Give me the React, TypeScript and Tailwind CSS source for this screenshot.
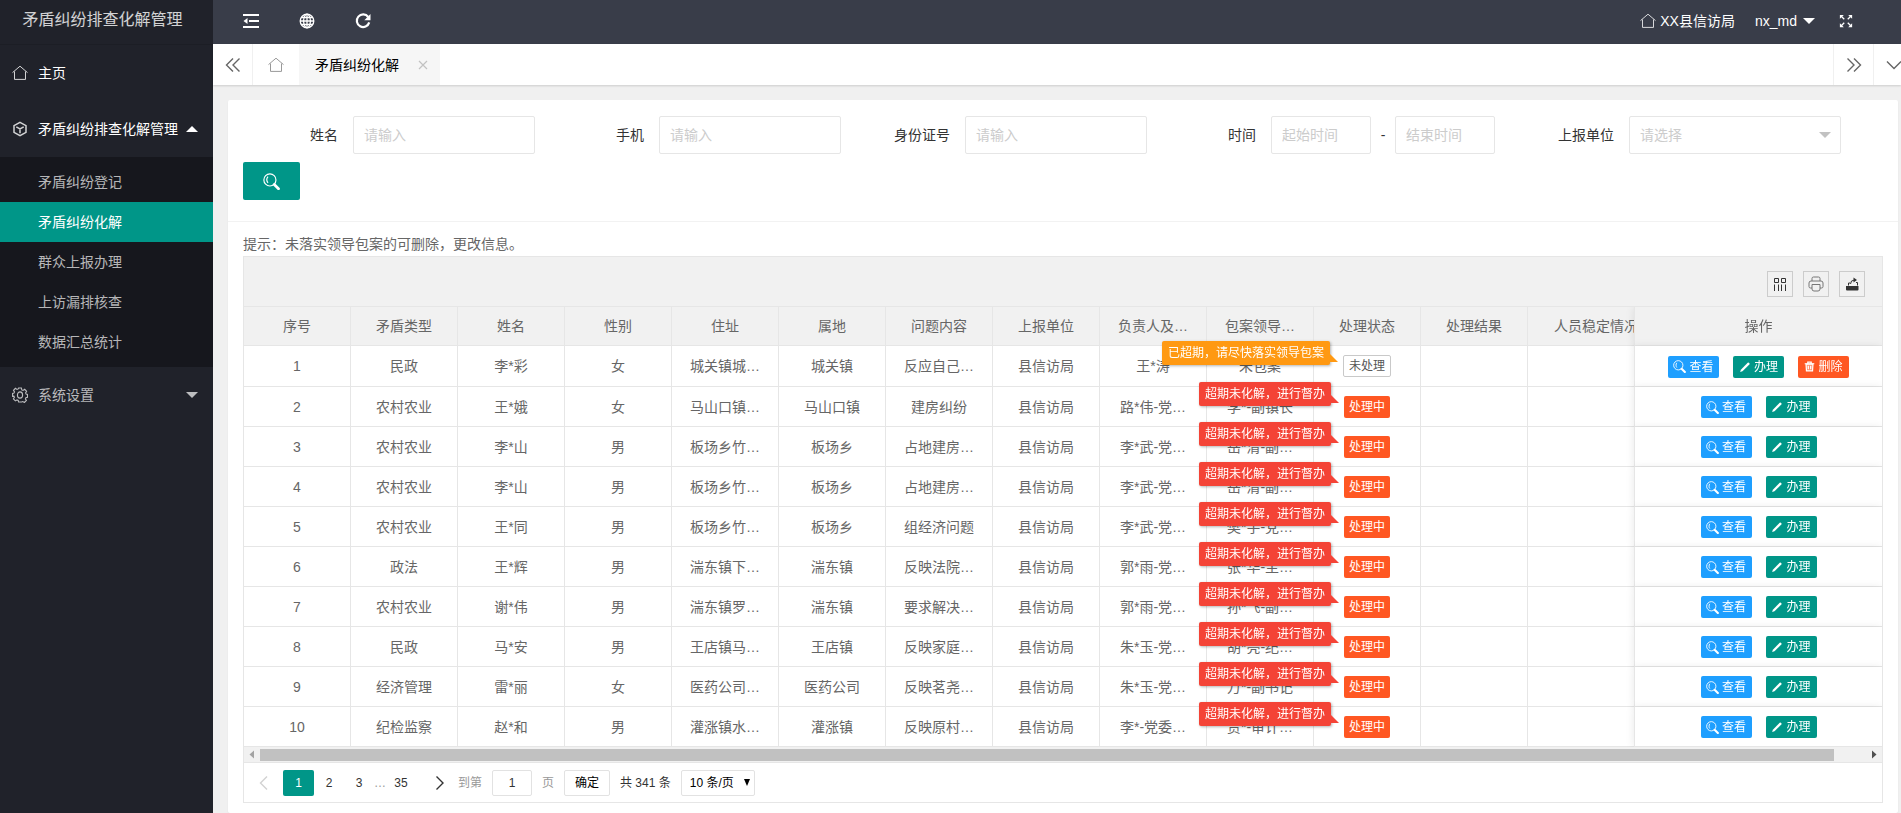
import { useState, type ReactNode } from "react";
import clsx from "clsx";

interface CaseRow {
  id: number;
  type: string;
  name: string;
  sex: string;
  address: string;
  area: string;
  content: string;
  unit: string;
  owner: string;
  leader: string;
  pending?: boolean;
}

const rows: CaseRow[] = [
  { id: 1, type: "民政", name: "李*彩", sex: "女", address: "城关镇城…", area: "城关镇", content: "反应自己…", unit: "县信访局", owner: "王*涛", leader: "未包案", pending: true },
  { id: 2, type: "农村农业", name: "王*娥", sex: "女", address: "马山口镇…", area: "马山口镇", content: "建房纠纷", unit: "县信访局", owner: "路*伟-党…", leader: "李*-副镇长" },
  { id: 3, type: "农村农业", name: "李*山", sex: "男", address: "板场乡竹…", area: "板场乡", content: "占地建房…", unit: "县信访局", owner: "李*武-党…", leader: "岳*清-副…" },
  { id: 4, type: "农村农业", name: "李*山", sex: "男", address: "板场乡竹…", area: "板场乡", content: "占地建房…", unit: "县信访局", owner: "李*武-党…", leader: "岳*清-副…" },
  { id: 5, type: "农村农业", name: "王*同", sex: "男", address: "板场乡竹…", area: "板场乡", content: "组经济问题", unit: "县信访局", owner: "李*武-党…", leader: "樊*宇-党…" },
  { id: 6, type: "政法", name: "王*辉", sex: "男", address: "湍东镇下…", area: "湍东镇", content: "反映法院…", unit: "县信访局", owner: "郭*雨-党…", leader: "张*华-主…" },
  { id: 7, type: "农村农业", name: "谢*伟", sex: "男", address: "湍东镇罗…", area: "湍东镇", content: "要求解决…", unit: "县信访局", owner: "郭*雨-党…", leader: "孙*飞-副…" },
  { id: 8, type: "民政", name: "马*安", sex: "男", address: "王店镇马…", area: "王店镇", content: "反映家庭…", unit: "县信访局", owner: "朱*玉-党…", leader: "胡*亮-纪…" },
  { id: 9, type: "经济管理", name: "雷*丽", sex: "女", address: "医药公司…", area: "医药公司", content: "反映茗尧…", unit: "县信访局", owner: "朱*玉-党…", leader: "万*-副书记" },
  { id: 10, type: "纪检监察", name: "赵*和", sex: "男", address: "灌涨镇水…", area: "灌涨镇", content: "反映原村…", unit: "县信访局", owner: "李*-党委…", leader: "贾*-审计…" },
];

const columns = [
  "序号", "矛盾类型", "姓名", "性别", "住址", "属地", "问题内容", "上报单位",
  "负责人及…", "包案领导…", "处理状态", "处理结果", "人员稳定情况",
];

const subMenu = ["矛盾纠纷登记", "矛盾纠纷化解", "群众上报办理", "上访漏排核查", "数据汇总统计"];

interface IconProps {
  className?: string;
}

function Svg({ className, children, box = 16, width = 1 }: IconProps & { children: ReactNode; box?: number; width?: number }) {
  return (
    <svg
      viewBox={`0 0 ${box} ${box}`}
      className={clsx("shrink-0", className)}
      fill="none"
      stroke="currentColor"
      strokeWidth={width}
      aria-hidden="true"
    >
      {children}
    </svg>
  );
}

const HomeIcon = ({ className }: IconProps) => (
  <Svg className={className}>
    <path d="M0.5 7.6 8 1.2l7.5 6.4M2.5 6.5v7.9h11V6.5" />
  </Svg>
);

const CubeIcon = ({ className }: IconProps) => (
  <Svg className={className} width={1.5}>
    <path d="M8 1.3 14 4.6v6.8L8 14.7 2 11.4V4.6zM4.3 5.9 8 8l3.7-2.1M8 8v4.3" />
  </Svg>
);

const GearIcon = ({ className }: IconProps) => (
  <Svg className={className} width={1.1}>
    <path d="M6.6 1h2.8l.4 1.9 1.2.5 1.7-1.1 1.9 2-1 1.6.5 1.2 1.4.4v2.8l-1.6.4-.5 1.2 1 1.6-2 2-1.6-1-1.2.5L9.4 15H6.6l-.4-1.6-1.2-.5-1.6 1-2-2 1-1.6-.5-1.2L.6 9.3V6.5L2 6.100l.5-1.200-1-1.600 1.900-2 1.600 1.100 1.200-.5z" />
    <ellipse cx="8" cy="8" rx="2.6" ry="3.1" />
  </Svg>
);

const ShrinkIcon = ({ className }: IconProps) => (
  <Svg className={className} width={2}>
    <path d="M0 2h16M6 8h10M0 14h16" />
    <path d="M4.5 5v6L0.5 8z" fill="currentColor" stroke="none" />
  </Svg>
);

const GlobeIcon = ({ className }: IconProps) => (
  <Svg className={className} width={1.3}>
    <circle cx="8" cy="8" r="6.8" />
    <ellipse cx="8" cy="8" rx="3.4" ry="6.8" />
    <path d="M8 1v14M1 8h14M2.2 4.5h11.6M2.2 11.5h11.6" />
  </Svg>
);

const RefreshIcon = ({ className }: IconProps) => (
  <Svg className={className} width={2.2}>
    <path d="M13.2 4A6.3 6.3 0 1 0 14.2 9.4" />
    <path d="M15.5 1v6.2H9.3z" fill="currentColor" stroke="none" />
  </Svg>
);

const ExpandIcon = ({ className }: IconProps) => (
  <Svg className={className} width={1.5}>
    <path d="M2 2l4 4M14 2l-4 4M2 14l4-4M14 14l-4-4" />
    <path d="M1 1h4.5L1 5.5zM15 1h-4.5L15 5.5zM1 15h4.5L1 10.5zM15 15h-4.5l4.5-4.5z" fill="currentColor" stroke="none" />
  </Svg>
);

const DoubleLeft = ({ className }: IconProps) => (
  <Svg className={className} width={1.4}>
    <path d="M8 1.5 1.5 8 8 14.5M14.5 1.5 8 8l6.5 6.5" />
  </Svg>
);

const DoubleRight = ({ className }: IconProps) => (
  <Svg className={className} width={1.4}>
    <path d="M8 1.5 14.5 8 8 14.5M1.5 1.5 8 8l-6.5 6.5" />
  </Svg>
);

const ChevronDown = ({ className }: IconProps) => (
  <Svg className={className} width={1.4}>
    <path d="M1 4.500l7 7 7-7" />
  </Svg>
);

const SearchIcon = ({ className }: IconProps) => (
  <Svg className={className} width={1.1}>
    <circle cx="6.5" cy="6.5" r="5.7" />
    <path d="M4.7 3.5c-1.3 1.6-1.3 4.2 0 5.8" />
    <path d="M10.6 10.8l4 4" strokeWidth={2.6} strokeLinecap="round" />
  </Svg>
);

const PencilIcon = ({ className }: IconProps) => (
  <Svg className={className}>
    <path d="M1.500 14.500l1-3L11.600 2.300a1.200 1.200 0 0 1 1.600 0l.6.600a1.200 1.200 0 0 1 0 1.600L4.600 13.500z" fill="currentColor" stroke="none" />
  </Svg>
);

const TrashIcon = ({ className }: IconProps) => (
  <Svg className={className} width={1.8}>
    <path d="M3 4.5l.6 10h8.8l.6-10z" fill="currentColor" fillOpacity={0.35} />
    <path d="M1 4h14M5.500 3.500v-2h5v2M6.300 7v5M9.700 7v5" />
  </Svg>
);

const ColumnsIcon = ({ className }: IconProps) => (
  <Svg className={className} box={14}>
    <path d="M1.5 1.5h4v4h-4zM8.5 1.5h4v4h-4zM1.5 7.5V14M5.5 7.5V14M8.5 7.5V14M12.5 7.5V14" />
  </Svg>
);

const PrinterIcon = ({ className }: IconProps) => (
  <Svg className={className}>
    <path d="M4 5V2.5Q4 1 5.5 1h5Q12 1 12 2.5V5M4 12H2.5Q1 12 1 10.5V7q0-2 2-2h10q2 0 2 2v3.5q0 1.5-1.5 1.5H12M4 8.500h8V13q0 2-2 2H6q-2 0-2-2z" />
  </Svg>
);

const ExportIcon = ({ className }: IconProps) => (
  <Svg className={className} box={14}>
    <path d="M1 9h12.5v3.5q0 1-1 1H2q-1 0-1-1z" fill="currentColor" stroke="none" />
    <path d="M3.5 8.5V6H5M11 5.5h1.5v3M5.5 7q0-4 4-4" />
    <path d="M8.5.5 12 3 8.5 5.5z" fill="currentColor" stroke="none" />
  </Svg>
);

function Caret({ up, className }: { up?: boolean; className?: string }) {
  return (
    <svg viewBox="0 0 12 6" className={clsx("h-1.5 w-3 shrink-0", className)} fill="currentColor" aria-hidden="true">
      <path d={up ? "M0 6h12L6 0z" : "M0 0h12L6 6z"} />
    </svg>
  );
}

const menuItem = "flex h-14 items-center whitespace-nowrap pl-3 pr-[15px]";

function Sidebar() {
  const [active, setActive] = useState("矛盾纠纷化解");
  return (
    <aside className="w-[213px] shrink-0 bg-[#20222a] text-sm text-white">
      <div className="flex h-[45px] items-center justify-center border-b border-[#1c1e25] pb-1 pr-2 text-base text-white/80">
        矛盾纠纷排查化解管理
      </div>
      <nav>
        <a href="#" className={menuItem}>
          <HomeIcon className="mr-2.5 size-4 text-white/80" />
          主页
        </a>
        <a href="#" className={menuItem}>
          <CubeIcon className="mr-2.5 size-4 text-white/80" />
          矛盾纠纷排查化解管理
          <Caret up className="ml-auto" />
        </a>
        <div className="bg-[#16171d] py-[5px]">
          {subMenu.map((item) => (
            <a
              key={item}
              href="#"
              onClick={() => setActive(item)}
              className={clsx(
                "flex h-10 items-center pl-[38px]",
                item === active ? "bg-[#009688] text-white" : "text-white/70"
              )}
            >
              {item}
            </a>
          ))}
        </div>
        <a href="#" className={clsx(menuItem, "text-white/70")}>
          <GearIcon className="mr-2.5 size-4" />
          系统设置
          <Caret className="ml-auto" />
        </a>
      </nav>
    </aside>
  );
}

function TopBar() {
  return (
    <header className="flex h-11 items-center justify-between bg-[#393d49] pb-0.5 pl-[30px] pr-12 text-sm text-white">
      <div className="flex items-center gap-10">
        <button aria-label="收起菜单"><ShrinkIcon className="size-4" /></button>
        <button aria-label="网站"><GlobeIcon className="size-4" /></button>
        <button aria-label="刷新"><RefreshIcon className="size-4" /></button>
      </div>
      <div className="flex items-center">
        <a href="#" className="flex items-center gap-1">
          <HomeIcon className="size-4 text-white/80" />
          XX县信访局
        </a>
        <button className="ml-5 flex items-center gap-1.5">
          nx_md
          <Caret />
        </button>
        <button aria-label="全屏" className="ml-6"><ExpandIcon className="size-[14px]" /></button>
      </div>
    </header>
  );
}

function TabBar() {
  return (
    <div className="relative flex h-[41px] overflow-hidden bg-white text-[#666] shadow-[0_1px_2px_rgba(0,0,0,0.15)]">
      <button aria-label="向左" className="flex w-10 items-center justify-center border-r border-[#f0f0f0]">
        <DoubleLeft className="size-4" />
      </button>
      <a href="#" aria-label="主页" className="flex w-[46px] items-center justify-center">
        <HomeIcon className="size-4 text-[#999]" />
      </a>
      <div className="flex items-center bg-[#f6f6f6] pl-4 pr-3 text-sm text-black">
        <a href="#">矛盾纠纷化解</a>
        <button aria-label="关闭" className="ml-[19px]">
          <Svg className="size-[10px] text-[#c2c2c2]" box={10} width={1.2}>
            <path d="M1 1l8 8M9 1L1 9" />
          </Svg>
        </button>
      </div>
      <div className="-mr-3 ml-auto flex">
        <button aria-label="向右" className="flex w-10 items-center justify-center border-l border-[#f0f0f0]">
          <DoubleRight className="size-4" />
        </button>
        <button aria-label="更多" className="flex w-10 items-center justify-center border-l border-[#f0f0f0]">
          <ChevronDown className="size-4" />
        </button>
      </div>
    </div>
  );
}

const inputClass = "h-[38px] rounded-xs border border-[#e6e6e6] bg-white pl-2.5 text-sm text-[#333] outline-none placeholder:text-[#ccc]";
const labelClass = "w-[110px] pr-[15px] text-right text-sm text-[#333]";

function TextField({ id, label }: { id: string; label: string }) {
  return (
    <div className="flex items-center">
      <label htmlFor={id} className={labelClass}>{label}</label>
      <input id={id} placeholder="请输入" className={clsx(inputClass, "w-[182px]")} />
    </div>
  );
}

function SearchForm() {
  return (
    <form className="flex flex-wrap gap-x-3.5 gap-y-2 border-b border-[#f2f2f2] px-[15px] pb-[21px] pt-4">
      <TextField id="name" label="姓名" />
      <TextField id="phone" label="手机" />
      <TextField id="idcard" label="身份证号" />
      <div className="flex items-center pr-2.5">
        <label htmlFor="start" className={labelClass}>时间</label>
        <input id="start" placeholder="起始时间" className={clsx(inputClass, "w-[100px]")} />
        <span className="w-6 text-center text-sm text-[#333]">-</span>
        <input id="end" aria-label="结束时间" placeholder="结束时间" className={clsx(inputClass, "w-[100px]")} />
      </div>
      <div className="flex items-center">
        <label htmlFor="unit" className={labelClass}>上报单位</label>
        <div className="relative">
          <select id="unit" className="h-[38px] w-[212px] appearance-none rounded-xs border border-[#e6e6e6] bg-white pl-2.5 text-sm text-[#ccc] outline-none">
            <option>请选择</option>
          </select>
          <Caret className="pointer-events-none absolute right-2.5 top-4 text-[#c2c2c2]" />
        </div>
      </div>
      <button type="button" aria-label="搜索" className="flex h-[38px] w-[57px] items-center justify-center rounded-xs bg-[#009688] text-white">
        <SearchIcon className="size-[17px]" />
      </button>
    </form>
  );
}

function Tip({ text, pending }: { text: string; pending?: boolean }) {
  return (
    <span
      className={clsx(
        "absolute right-full top-[-14px] mr-[13px] h-6 whitespace-nowrap rounded-xs px-1.5 text-xs leading-6 text-white shadow-[1px_1px_3px_rgba(0,0,0,0.3)]",
        pending ? "bg-[#ff9912]" : "bg-[#f44336]"
      )}
    >
      {text}
      <svg viewBox="0 0 8 8" aria-hidden="true" className={clsx("absolute bottom-[3px] left-full size-2", pending ? "text-[#ff9912]" : "text-[#f44336]")}>
        <path d="M0 0l8 8H0z" fill="currentColor" />
      </svg>
    </span>
  );
}

const cell = "border-b border-r border-[#e6e6e6] p-0 text-center font-normal whitespace-nowrap";
const fixedCell = "sticky right-0 border-l border-r-0 shadow-[-1px_0_8px_rgba(0,0,0,0.08)]";
const action = "flex h-[22px] w-[51px] items-center justify-center gap-[3px] rounded-xs text-xs text-white";

function DataTable() {
  return (
    <div className="overflow-hidden">
      <table className="w-[calc(100%+31px)] table-fixed border-separate border-spacing-0 text-sm text-[#666]">
        <colgroup>
          {columns.slice(0, 12).map((c) => <col key={c} />)}
          <col className="w-[137px]" />
          <col className="w-[248px]" />
        </colgroup>
        <thead>
          <tr className="h-[39px] bg-[#f1f1f1]">
            {columns.map((c) => <th key={c} className={cell}>{c}</th>)}
            <th className={clsx(cell, fixedCell, "bg-[#f1f1f1]")}>操作</th>
          </tr>
        </thead>
        <tbody>
          {rows.map((r) => (
            <tr key={r.id} className="h-10 first:h-[41px]">
              {[r.id, r.type, r.name, r.sex, r.address, r.area, r.content, r.unit, r.owner, r.leader].map((v, i) => (
                <td key={i} className={cell}>{v}</td>
              ))}
              <td className={cell}>
                <div className="relative inline-flex align-middle">
                  <button
                    className={clsx(
                      "h-[22px] rounded-xs px-[5px] text-xs",
                      r.pending ? "border border-[#c9c9c9] bg-white text-[#555]" : "bg-[#ff5722] text-white"
                    )}
                  >
                    {r.pending ? "未处理" : "处理中"}
                  </button>
                  <Tip pending={r.pending} text={r.pending ? "已超期，请尽快落实领导包案" : "超期未化解，进行督办"} />
                </div>
              </td>
              <td className={cell} />
              <td className={cell} />
              <td className={clsx(cell, fixedCell, "bg-white")}>
                <div className="flex items-center justify-center gap-[14px] pt-px">
                  <button className={clsx(action, "bg-[#1e9fff]")}>
                    <SearchIcon className="size-[13px]" />
                    查看
                  </button>
                  <button className={clsx(action, "bg-[#009688]")}>
                    <PencilIcon className="size-3" />
                    办理
                  </button>
                  {r.pending && (
                    <button className={clsx(action, "bg-[#ff5722]")}>
                      <TrashIcon className="size-[11px]" />
                      删除
                    </button>
                  )}
                </div>
              </td>
            </tr>
          ))}
        </tbody>
      </table>
    </div>
  );
}

function ScrollTrack() {
  return (
    <div className="flex h-[15px] items-center bg-[#f1f1f1]">
      <svg viewBox="0 0 16 15" className="h-[15px] w-4 shrink-0 text-[#a3a3a3]" aria-hidden="true">
        <path d="M10 3.500v8L5.500 7.500z" fill="currentColor" />
      </svg>
      <div className="flex-1">
        <div className="h-3 w-[98%] bg-[#c1c1c1]" />
      </div>
      <svg viewBox="0 0 16 15" className="h-[15px] w-4 shrink-0 text-[#505050]" aria-hidden="true">
        <path d="M6 3.500v8l4.500-4z" fill="currentColor" />
      </svg>
    </div>
  );
}

function Pagination() {
  const [page, setPage] = useState(1);
  const pageBtn = (n: number) => (
    <button
      key={n}
      onClick={() => setPage(n)}
      className={clsx("h-[26px] rounded-xs", n === page ? "w-[31px] bg-[#009688] text-white" : "w-[30px]")}
    >
      {n}
    </button>
  );
  return (
    <div className="flex h-10 items-center border-t border-[#e6e6e6] pl-3 text-xs text-[#333]">
      <button aria-label="上一页" className="mr-[11px] text-[#d2d2d2]">
        <Svg className="size-4" width={1.4}><path d="M11 1.5 4.5 8l6.5 6.5" /></Svg>
      </button>
      {pageBtn(1)}
      {pageBtn(2)}
      {pageBtn(3)}
      <span className="text-[#999]">…</span>
      {pageBtn(35)}
      <button aria-label="下一页" className="ml-4">
        <Svg className="size-4" width={1.4}><path d="M4.5 1.5 11 8l-6.5 6.5" /></Svg>
      </button>
      <label htmlFor="jump" className="ml-2.5 text-[#999]">到第</label>
      <input id="jump" defaultValue="1" className="ml-2.5 h-[26px] w-10 rounded-xs border border-[#e2e2e2] text-center text-[#333] outline-none" />
      <span className="ml-2.5 text-[#999]">页</span>
      <button className="ml-2.5 h-[26px] w-[46px] rounded-xs border border-[#e2e2e2] text-black">确定</button>
      <span className="ml-2.5">共 341 条</span>
      <div className="relative ml-2.5">
        <select aria-label="每页条数" className="h-[26px] w-[74px] appearance-none rounded-xs border border-[#e2e2e2] bg-white pl-2 text-xs text-black outline-none">
          <option>10 条/页</option>
        </select>
        <svg viewBox="0 0 6 7" className="pointer-events-none absolute right-[5px] top-[9px] h-[7px] w-1.5" aria-hidden="true">
          <path d="M0 0h6L3 7z" />
        </svg>
      </div>
    </div>
  );
}

const toolBtn = "flex size-[26px] items-center justify-center border border-[#ccc] text-[#333]";

export default function App() {
  return (
    <div className="flex min-h-screen bg-[#f0f0f0] font-['Liberation_Sans','Noto_Sans_CJK_SC',sans-serif]">
      <Sidebar />
      <div className="flex min-w-0 flex-1 flex-col">
        <TopBar />
        <TabBar />
        <main className="pl-[15px] pr-[3px] pt-[15px]">
          <div className="rounded-xs bg-white shadow-[0_1px_2px_rgba(0,0,0,0.05)]">
            <SearchForm />
            <div className="px-[15px] pb-2.5 pt-2.5">
              <p className="text-sm leading-6 text-[#666]">提示：未落实领导包案的可删除，更改信息。</p>
              <div className="border border-[#e6e6e6]">
                <div className="flex h-[50px] items-center justify-end gap-2.5 border-b border-[#e6e6e6] bg-[#f1f1f1] pr-[17px] pt-1">
                  <button aria-label="筛选列" className={toolBtn}><ColumnsIcon className="size-[14px]" /></button>
                  <button aria-label="打印" className={toolBtn}><PrinterIcon className="size-4 text-[#777]" /></button>
                  <button aria-label="导出" className={toolBtn}><ExportIcon className="size-[14px]" /></button>
                </div>
                <DataTable />
                <ScrollTrack />
                <Pagination />
              </div>
            </div>
          </div>
        </main>
      </div>
    </div>
  );
}
